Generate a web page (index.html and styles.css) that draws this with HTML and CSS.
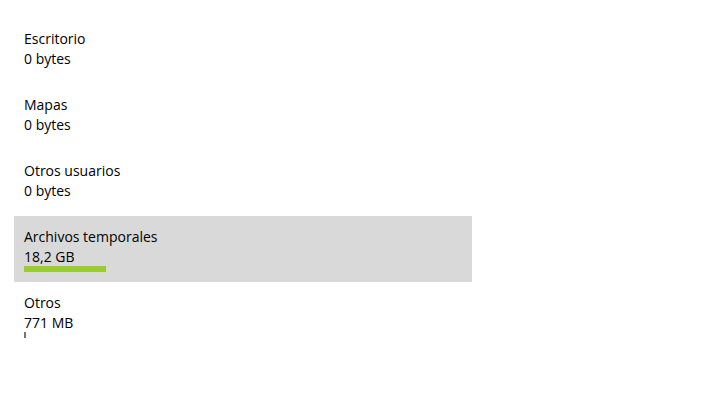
FILE: index.html
```html
<!DOCTYPE html>
<html lang="es">
<head>
<meta charset="utf-8">
<title>Almacenamiento</title>
<link rel="stylesheet" href="styles.css">
</head>
<body>
<ul class="usage-list">
  <li class="usage-item">
    <div class="usage-name">Escritorio</div>
    <div class="usage-size">0 bytes</div>
  </li>
  <li class="usage-item">
    <div class="usage-name">Mapas</div>
    <div class="usage-size">0 bytes</div>
  </li>
  <li class="usage-item">
    <div class="usage-name">Otros usuarios</div>
    <div class="usage-size">0 bytes</div>
  </li>
  <li class="usage-item is-selected">
    <div class="usage-name">Archivos temporales</div>
    <div class="usage-size">18,2 GB</div>
    <div class="usage-bar"><span class="usage-fill fill-green" style="width: 82px"></span></div>
  </li>
  <li class="usage-item">
    <div class="usage-name">Otros</div>
    <div class="usage-size">771 MB</div>
    <div class="usage-bar"><span class="usage-fill fill-gray" style="width: 2px"></span></div>
  </li>
</ul>
</body>
</html>
```
FILE: styles.css
```css
html, body {
  margin: 0;
  padding: 0;
  background: #ffffff;
}

body {
  font-family: "Open Sans", "Noto Sans", sans-serif;
  font-size: 14px;
  color: #000000;
}

.usage-list {
  list-style: none;
  margin: 0;
  padding: 18px 0 0 14px;
  width: 458px;
}

.usage-item {
  height: 66px;
  box-sizing: border-box;
  padding: 11px 10px 0;
}

.usage-item.is-selected {
  background: #d9d9d9;
}

.usage-name,
.usage-size {
  line-height: 20px;
  white-space: nowrap;
}

.usage-size {
  height: 19px;
}

.usage-bar {
  display: flex;
  height: 6px;
}

.usage-fill {
  display: block;
  height: 100%;
}

.fill-green {
  background: #9acd32;
}

.fill-gray {
  background: #767676;
}
```
